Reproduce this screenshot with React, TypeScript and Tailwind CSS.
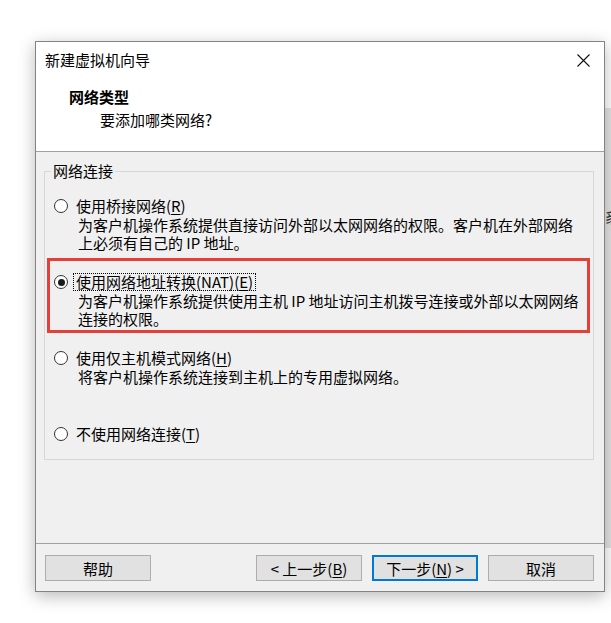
import React from "react";

const font = { fontFamily: '"Noto Sans CJK SC", "Noto Sans", sans-serif' };

function Radio({ checked }: { checked?: boolean }) {
  return (
    <span className="w-[14px] h-[14px] rounded-full border border-[#333333] bg-white flex items-center justify-center shrink-0">
      {checked && <span className="w-[7px] h-[7px] rounded-full bg-[#1a1a1a]" />}
    </span>
  );
}

function Btn({ children, focused }: { children: React.ReactNode; focused?: boolean }) {
  return (
    <div
      className={
        "w-[106px] h-[26px] flex items-center justify-center bg-[#e1e1e1] text-[15px] text-black leading-none " +
        (focused ? "border-2 border-[#0078d7]" : "border border-[#adadad]")
      }
    >
      {children}
    </div>
  );
}

function U({ children }: { children: React.ReactNode }) {
  return <span className="underline underline-offset-[2px] decoration-1">{children}</span>;
}

function Item({
  label,
  desc,
  checked,
  focus,
}: {
  label: React.ReactNode;
  desc: string[];
  checked?: boolean;
  focus?: boolean;
}) {
  return (
    <div className="h-[76px] flex flex-col">
      <div className="h-[20px] flex items-center">
        <Radio checked={checked} />
        <span
          className={
            "ml-[5px] h-[18px] flex items-center px-[2px] text-[15px] leading-[18px] text-black " +
            (focus ? "border border-dotted border-black" : "border border-transparent")
          }
        >
          {label}
        </span>
      </div>
      <div className="pl-[24px] text-[15px] leading-[18px] text-black">
        {desc.map((d, i) => (
          <div key={i} className="h-[18px] whitespace-nowrap">
            {d}
          </div>
        ))}
      </div>
    </div>
  );
}

export default function App() {
  return (
    <div className="relative w-[611px] h-[623px] bg-white overflow-hidden" style={font}>
      {/* background window strip */}
      <div className="absolute left-[605px] top-[108px] w-[6px] h-[440px] bg-[#e4e4e4] overflow-hidden">
        <span className="absolute left-[-1px] top-[100px] text-[15px] leading-[18px] text-[#333]">豸</span>
      </div>

      {/* dialog window */}
      <div className="absolute left-[35px] top-[41px] w-[570px] h-[551px] border border-[#838383] bg-[#f0f0f0] flex flex-col shadow-[0_4px_16px_rgba(0,0,0,0.28)]">
        {/* header */}
        <div className="h-[110px] bg-white border-b border-[#a0a0a0] flex flex-col shrink-0">
          <div className="h-[36px] flex items-center justify-between pl-[9px] pr-[14px]">
            <span className="text-[15px] leading-[18px] text-black">新建虚拟机向导</span>
            <svg width="13" height="13" viewBox="0 0 13 13">
              <path d="M0.5 0.5 L12.5 12.5 M12.5 0.5 L0.5 12.5" stroke="#111" strokeWidth="1.1" />
            </svg>
          </div>
          <div className="mt-[10px] pl-[33px] h-[18px] flex items-center text-[15px] font-bold text-black">
            网络类型
          </div>
          <div className="mt-[5px] pl-[64px] h-[18px] flex items-center text-[15px] text-black">
            要添加哪类网络?
          </div>
        </div>

        {/* body */}
        <div className="flex-1 pt-[19px] pl-[8px] pr-[10px]">
          <div className="relative h-[289px] border border-[#d7d7d7] pt-[24px] pl-[9px]">
            <span className="absolute left-[6px] top-[-10px] px-[2px] bg-[#f0f0f0] text-[15px] leading-[18px] text-black">
              网络连接
            </span>
            <Item
              label={
                <>
                  使用桥接网络(<U>R</U>)
                </>
              }
              desc={[
                "为客户机操作系统提供直接访问外部以太网网络的权限。客户机在外部网络",
                "上必须有自己的 IP 地址。",
              ]}
            />
            <Item
              checked
              focus
              label={
                <>
                  使用网络地址转换(NAT)(<U>E</U>)
                </>
              }
              desc={[
                "为客户机操作系统提供使用主机 IP 地址访问主机拨号连接或外部以太网网络",
                "连接的权限。",
              ]}
            />
            <Item
              label={
                <>
                  使用仅主机模式网络(<U>H</U>)
                </>
              }
              desc={["将客户机操作系统连接到主机上的专用虚拟网络。"]}
            />
            <Item
              label={
                <>
                  不使用网络连接(<U>T</U>)
                </>
              }
              desc={[]}
            />
            {/* red annotation box */}
            <div className="absolute left-[2px] top-[86px] w-[543px] h-[75px] border-[3px] border-[#e3403b]" />
          </div>
        </div>

        {/* footer */}
        <div className="h-[48px] border-t border-[#a0a0a0] shrink-0 flex items-start pt-[11px] pl-[9px] pr-[10px]">
          <Btn>帮助</Btn>
          <div className="flex-1" />
          <div className="flex gap-[10px]">
            <Btn>
              &lt; 上一步(<U>B</U>)
            </Btn>
            <Btn focused>
              下一步(<U>N</U>) &gt;
            </Btn>
            <Btn>取消</Btn>
          </div>
        </div>
      </div>
    </div>
  );
}
